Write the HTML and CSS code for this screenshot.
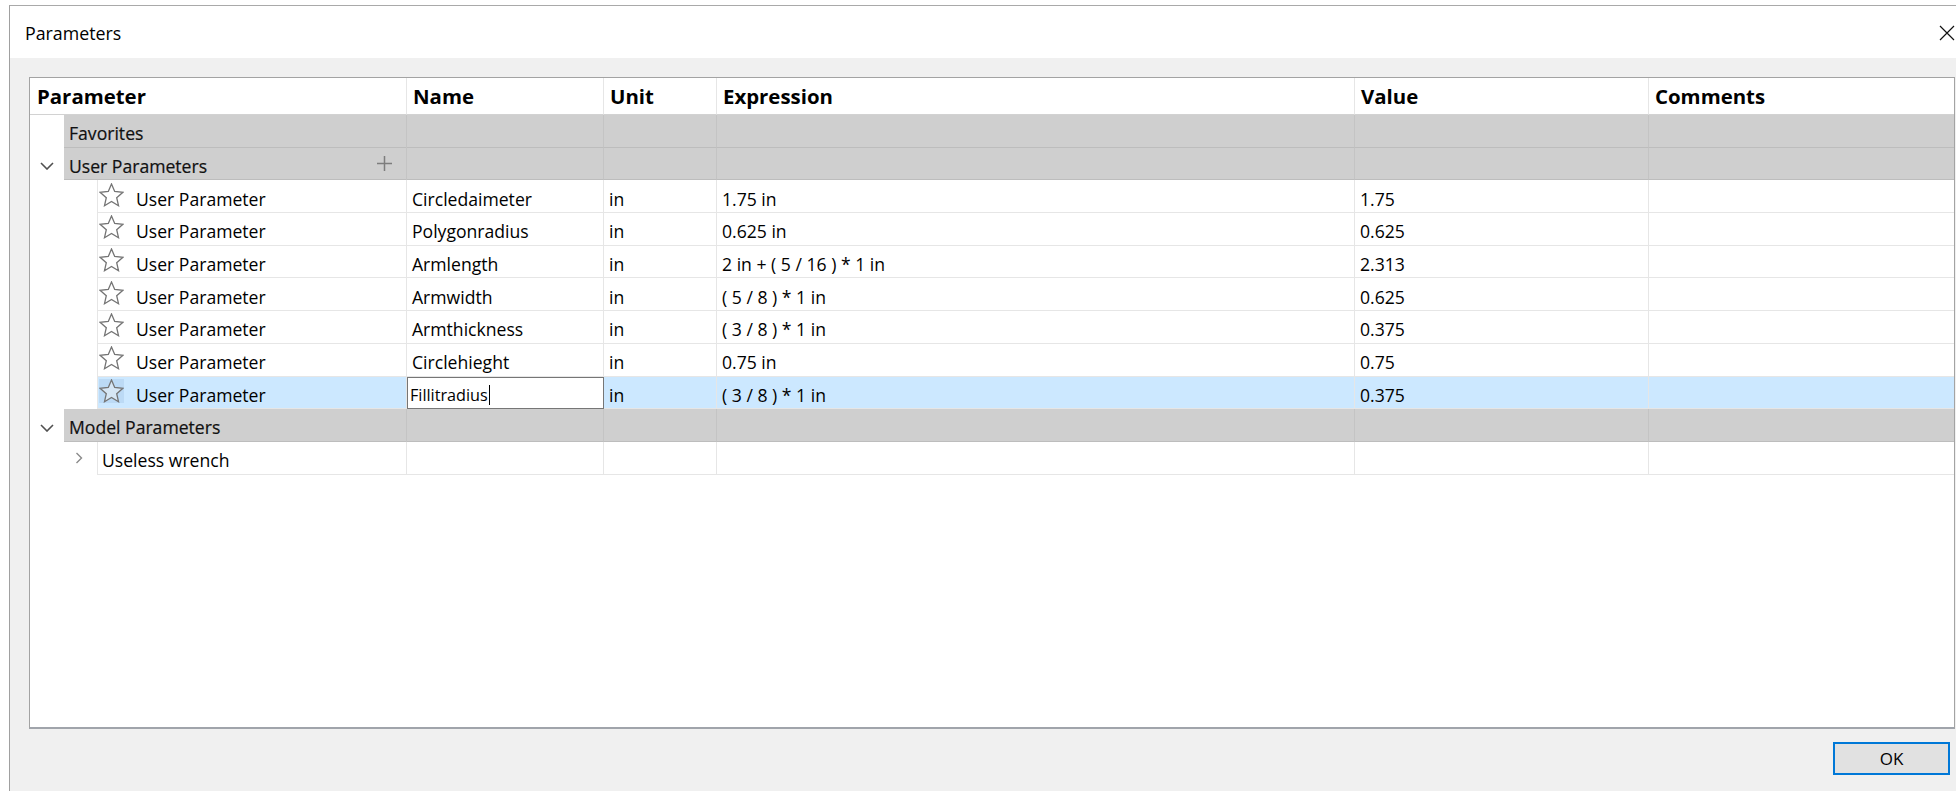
FILE: index.html
```html
<!DOCTYPE html>
<html lang="en">
<head>
<meta charset="utf-8">
<title>Parameters</title>
<link rel="stylesheet" href="styles.css">
</head>
<body>
<div class="dialog">
  <div class="titlebar">
    <span class="title">Parameters</span>
    <button class="close" aria-label="Close">
      <svg width="16" height="16" viewBox="0 0 16 16"><path d="M1 1 L15 15 M15 1 L1 15" stroke="#111" stroke-width="1.2" fill="none"/></svg>
    </button>
  </div>

  <div class="content">
    <div class="panel">
      <div class="row head">
        <div class="c">Parameter</div>
        <div class="c">Name</div>
        <div class="c">Unit</div>
        <div class="c">Expression</div>
        <div class="c">Value</div>
        <div class="c">Comments</div>
      </div>

      <div class="row group">
        <div class="c tree"><span class="twisty"></span><span class="label"><span class="gt">Favorites</span></span></div>
        <div class="c"></div><div class="c"></div><div class="c"></div><div class="c"></div><div class="c"></div>
      </div>

      <div class="row group">
        <div class="c tree">
          <span class="twisty"><svg class="chev-down" width="14" height="8" viewBox="0 0 14 8"><polyline points="1,1 7,7 13,1"/></svg></span>
          <span class="label"><span class="gt">User Parameters</span>
            <svg class="plus" width="17" height="17" viewBox="0 0 17 17"><path d="M8.5 1v15M1 8.5h15"/></svg>
          </span>
        </div>
        <div class="c"></div><div class="c"></div><div class="c"></div><div class="c"></div><div class="c"></div>
      </div>

      <div class="row item">
        <div class="c tree"><span class="indent"></span><span class="node"><svg class="star" width="25" height="24" viewBox="0 0 25 24"><polygon points="12.5,1 15.7,8.5 23.9,9.3 17.7,14.7 19.5,22.7 12.5,18.5 5.5,22.7 7.3,14.7 1.1,9.3 9.3,8.5"/></svg><span class="t">User Parameter</span></span></div>
        <div class="c"><span class="t">Circledaimeter</span></div>
        <div class="c"><span class="t">in</span></div>
        <div class="c"><span class="t">1.75 in</span></div>
        <div class="c"><span class="t">1.75</span></div>
        <div class="c"></div>
      </div>

      <div class="row item">
        <div class="c tree"><span class="indent"></span><span class="node"><svg class="star" width="25" height="24" viewBox="0 0 25 24"><polygon points="12.5,1 15.7,8.5 23.9,9.3 17.7,14.7 19.5,22.7 12.5,18.5 5.5,22.7 7.3,14.7 1.1,9.3 9.3,8.5"/></svg><span class="t">User Parameter</span></span></div>
        <div class="c"><span class="t">Polygonradius</span></div>
        <div class="c"><span class="t">in</span></div>
        <div class="c"><span class="t">0.625 in</span></div>
        <div class="c"><span class="t">0.625</span></div>
        <div class="c"></div>
      </div>

      <div class="row item">
        <div class="c tree"><span class="indent"></span><span class="node"><svg class="star" width="25" height="24" viewBox="0 0 25 24"><polygon points="12.5,1 15.7,8.5 23.9,9.3 17.7,14.7 19.5,22.7 12.5,18.5 5.5,22.7 7.3,14.7 1.1,9.3 9.3,8.5"/></svg><span class="t">User Parameter</span></span></div>
        <div class="c"><span class="t">Armlength</span></div>
        <div class="c"><span class="t">in</span></div>
        <div class="c"><span class="t">2 in + ( 5 / 16 ) * 1 in</span></div>
        <div class="c"><span class="t">2.313</span></div>
        <div class="c"></div>
      </div>

      <div class="row item">
        <div class="c tree"><span class="indent"></span><span class="node"><svg class="star" width="25" height="24" viewBox="0 0 25 24"><polygon points="12.5,1 15.7,8.5 23.9,9.3 17.7,14.7 19.5,22.7 12.5,18.5 5.5,22.7 7.3,14.7 1.1,9.3 9.3,8.5"/></svg><span class="t">User Parameter</span></span></div>
        <div class="c"><span class="t">Armwidth</span></div>
        <div class="c"><span class="t">in</span></div>
        <div class="c"><span class="t">( 5 / 8 ) * 1 in</span></div>
        <div class="c"><span class="t">0.625</span></div>
        <div class="c"></div>
      </div>

      <div class="row item">
        <div class="c tree"><span class="indent"></span><span class="node"><svg class="star" width="25" height="24" viewBox="0 0 25 24"><polygon points="12.5,1 15.7,8.5 23.9,9.3 17.7,14.7 19.5,22.7 12.5,18.5 5.5,22.7 7.3,14.7 1.1,9.3 9.3,8.5"/></svg><span class="t">User Parameter</span></span></div>
        <div class="c"><span class="t">Armthickness</span></div>
        <div class="c"><span class="t">in</span></div>
        <div class="c"><span class="t">( 3 / 8 ) * 1 in</span></div>
        <div class="c"><span class="t">0.375</span></div>
        <div class="c"></div>
      </div>

      <div class="row item">
        <div class="c tree"><span class="indent"></span><span class="node"><svg class="star" width="25" height="24" viewBox="0 0 25 24"><polygon points="12.5,1 15.7,8.5 23.9,9.3 17.7,14.7 19.5,22.7 12.5,18.5 5.5,22.7 7.3,14.7 1.1,9.3 9.3,8.5"/></svg><span class="t">User Parameter</span></span></div>
        <div class="c"><span class="t">Circlehieght</span></div>
        <div class="c"><span class="t">in</span></div>
        <div class="c"><span class="t">0.75 in</span></div>
        <div class="c"><span class="t">0.75</span></div>
        <div class="c"></div>
      </div>

      <div class="row item sel">
        <div class="c tree"><span class="indent"></span><span class="node"><span class="star-hover"><svg class="star" width="25" height="24" viewBox="0 0 25 24"><polygon points="12.5,1 15.7,8.5 23.9,9.3 17.7,14.7 19.5,22.7 12.5,18.5 5.5,22.7 7.3,14.7 1.1,9.3 9.3,8.5"/></svg></span><span class="t">User Parameter</span></span></div>
        <div class="c edit"><span class="editor"><span class="t">Fillitradius</span><span class="caret"></span></span></div>
        <div class="c"><span class="t">in</span></div>
        <div class="c"><span class="t">( 3 / 8 ) * 1 in</span></div>
        <div class="c"><span class="t">0.375</span></div>
        <div class="c"></div>
      </div>

      <div class="row group">
        <div class="c tree">
          <span class="twisty"><svg class="chev-down" width="14" height="8" viewBox="0 0 14 8"><polyline points="1,1 7,7 13,1"/></svg></span>
          <span class="label"><span class="gt">Model Parameters</span></span>
        </div>
        <div class="c"></div><div class="c"></div><div class="c"></div><div class="c"></div><div class="c"></div>
      </div>

      <div class="row item">
        <div class="c tree"><span class="indent collapsed"><svg class="chev-right" width="8" height="12" viewBox="0 0 8 12"><polyline points="1.5,1 6.5,6 1.5,11"/></svg></span><span class="node plain"><span class="t">Useless wrench</span></span></div>
        <div class="c"></div><div class="c"></div><div class="c"></div><div class="c"></div><div class="c"></div>
      </div>
    </div>

    <div class="footer">
      <button class="ok">OK</button>
    </div>
  </div>
</div>
</body>
</html>
```

FILE: styles.css
```css
:root {
  --grid-line: #e6e6e6;
  --group-bg: #cfcfcf;
  --group-line: #bdbdbd;
  --group-vline: #c4c4c4;
  --select-bg: #cce8ff;
}

html, body {
  margin: 0;
  padding: 0;
}

body {
  background: #ffffff;
  overflow: hidden;
  font-family: "Open Sans", "Liberation Sans", sans-serif;
  font-size: 17.6px;
  color: #000;
}

/* window frame */
.dialog {
  margin: 5px 0 0 9px;
  width: 1947px;
  height: 786px;
  box-sizing: border-box;
  border-left: 1px solid #a0a0a0;
  border-top: 1px solid #a9a9a9;
  background: #f0f0f0;
  display: flex;
  flex-direction: column;
}

.titlebar {
  height: 52px;
  flex: none;
  box-sizing: border-box;
  background: #ffffff;
  display: flex;
  justify-content: space-between;
  align-items: flex-start;
  padding: 15px 1px 0 15px;
}

.title {
  line-height: normal;
  font-size: 17.8px;
}

.close {
  border: 0;
  background: none;
  padding: 0;
  margin-top: 4px;
  width: 16px;
  height: 16px;
  display: block;
}

.close svg {
  display: block;
}

.content {
  flex: 1;
  display: flex;
  flex-direction: column;
  padding: 19px 1px 0 19px;
}

/* parameter table */
.panel {
  height: 652px;
  flex: none;
  box-sizing: border-box;
  border: 1px solid #a3a3a3;
  border-bottom: 2px solid #a0a4ab;
  background: #ffffff;
}

.row {
  display: grid;
  grid-template-columns: 377px 197px 113px 638px 294px 1fr;
  height: 32.7px;
}

.c {
  box-sizing: border-box;
  border-right: 1px solid var(--grid-line);
  border-bottom: 1px solid var(--grid-line);
  display: flex;
  align-items: center;
  padding-left: 5px;
  white-space: nowrap;
  overflow: hidden;
  min-width: 0;
}

.c:last-child {
  border-right: none;
}

.t {
  padding-top: 5px;
}

/* header */
.row.head {
  height: 37px;
}

.head .c {
  font-weight: 700;
  font-size: 20.4px;
  padding-left: 6px;
  border-bottom-color: #d2d2d2;
}

.head .c:first-child {
  padding-left: 7px;
}

/* group rows */
.group .c {
  background: var(--group-bg);
  border-right-color: var(--group-vline);
  border-bottom-color: var(--group-line);
}

.group .c.tree {
  background: none;
  border-bottom: none;
  padding-left: 0;
  align-items: stretch;
}

.twisty {
  width: 34px;
  flex: none;
  box-sizing: border-box;
  display: flex;
  align-items: center;
  padding-left: 10px;
  background: #ffffff;
}

.chev-down {
  margin-top: 4px;
}

.chev-down polyline {
  fill: none;
  stroke: #505050;
  stroke-width: 1.6;
}

.label {
  flex: 1;
  display: flex;
  align-items: center;
  padding-left: 5px;
  background: var(--group-bg);
  border-bottom: 1px solid var(--group-line);
  color: #111;
}

.gt {
  padding-top: 4px;
  -webkit-text-stroke: 0.2px #111;
}

.plus {
  margin-left: auto;
  margin-right: 13px;
}

.plus path {
  stroke: #7d7d7d;
  stroke-width: 1.5;
  fill: none;
}

/* parameter rows */
.item .c.tree {
  padding-left: 0;
  border-bottom: none;
  align-items: stretch;
}

.indent {
  width: 67px;
  flex: none;
  display: flex;
  align-items: center;
  background: #ffffff;
}

.indent.collapsed {
  padding-left: 45px;
  box-sizing: border-box;
}

.chev-right polyline {
  fill: none;
  stroke: #8a8a8a;
  stroke-width: 1.4;
}

.node {
  flex: 1;
  display: flex;
  align-items: center;
  padding-left: 1px;
  border-left: 1px solid var(--grid-line);
  border-bottom: 1px solid var(--grid-line);
}

.node.plain {
  padding-left: 4px;
}

.star {
  flex: none;
  margin-right: 12px;
  margin-bottom: 3px;
}

.star polygon {
  fill: #ffffff;
  stroke: #747474;
  stroke-width: 1.3;
  stroke-linejoin: miter;
}

/* selected row */
.sel .c:not(.tree),
.sel .node {
  background: var(--select-bg);
}

.star-hover {
  display: flex;
  margin-right: 12px;
  margin-bottom: 3px;
  background: rgba(70, 120, 170, 0.12);
}

.star-hover .star {
  margin: 0;
}

.star-hover .star polygon {
  fill: #d6e6f4;
}

.c.edit {
  padding: 0;
  border: none;
  align-items: stretch;
}

.editor {
  flex: 1;
  box-sizing: border-box;
  border: 1px solid #767676;
  background: #ffffff;
  display: flex;
  align-items: center;
  padding-left: 2px;
  font-size: 16.2px;
}

.caret {
  width: 1px;
  height: 20px;
  margin-top: 4px;
  margin-left: 1px;
  background: #000;
}

/* buttons */
.footer {
  display: flex;
  justify-content: flex-end;
  padding: 13px 5px 0 0;
}

.ok {
  width: 117px;
  height: 33px;
  box-sizing: border-box;
  border: 2px solid #0078d7;
  background: #e1e1e1;
  font-family: inherit;
  font-size: 17px;
  color: #000;
  padding: 0;
}
```
